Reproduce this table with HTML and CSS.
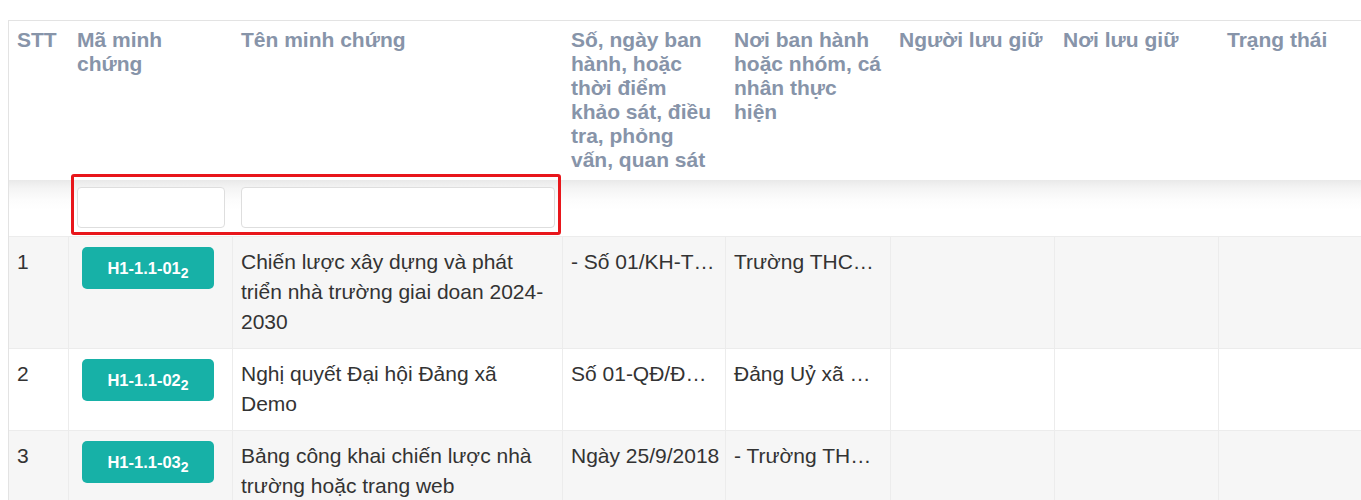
FILE: index.html
```html
<!DOCTYPE html>
<html lang="vi">
<head>
<meta charset="utf-8">
<title>Minh chứng</title>
<link rel="stylesheet" href="styles.css">
</head>
<body>
<div class="page">
  <div class="table-wrap">
    <div class="row head-row">
      <div class="cell">STT</div>
      <div class="cell">Mã minh chứng</div>
      <div class="cell">Tên minh chứng</div>
      <div class="cell">Số, ngày ban hành, hoặc thời điểm khảo sát, điều tra, phỏng vấn, quan sát</div>
      <div class="cell">Nơi ban hành hoặc nhóm, cá nhân thực hiện</div>
      <div class="cell">Người lưu giữ</div>
      <div class="cell">Nơi lưu giữ</div>
      <div class="cell">Trạng thái</div>
    </div>
    <div class="row filter-row">
      <div class="cell"></div>
      <div class="cell"><input class="filter-input" type="text"></div>
      <div class="cell"><input class="filter-input" type="text"></div>
      <div class="cell"></div>
      <div class="cell"></div>
      <div class="cell"></div>
      <div class="cell"></div>
      <div class="cell"></div>
    </div>
    <div class="row body-row striped">
      <div class="cell">1</div>
      <div class="cell"><span class="badge">H1-1.1-01<sub>2</sub></span></div>
      <div class="cell">Chiến lược xây dựng và phát triển nhà trường giai doan 2024-2030</div>
      <div class="cell clip">- Số 01/KH-THCS ngày 05/9/2024</div>
      <div class="cell clip wide-pad">Trường THCS Demo</div>
      <div class="cell"></div>
      <div class="cell"></div>
      <div class="cell"></div>
    </div>
    <div class="row body-row">
      <div class="cell">2</div>
      <div class="cell"><span class="badge">H1-1.1-02<sub>2</sub></span></div>
      <div class="cell">Nghị quyết Đại hội Đảng xã Demo</div>
      <div class="cell clip">Số 01-QĐ/ĐU ngày 10/7/2020</div>
      <div class="cell clip wide-pad">Đảng Uỷ xã Demo</div>
      <div class="cell"></div>
      <div class="cell"></div>
      <div class="cell"></div>
    </div>
    <div class="row body-row striped">
      <div class="cell">3</div>
      <div class="cell"><span class="badge">H1-1.1-03<sub>2</sub></span></div>
      <div class="cell">Bảng công khai chiến lược nhà trường hoặc trang web</div>
      <div class="cell clip">Ngày 25/9/2018</div>
      <div class="cell clip wide-pad">- Trường THCS Demo</div>
      <div class="cell"></div>
      <div class="cell"></div>
      <div class="cell"></div>
    </div>
    <div class="highlight"></div>
  </div>
</div>
</body>
</html>
```
FILE: styles.css
```css
html, body {
  margin: 0;
  padding: 0;
  background: #ffffff;
  overflow: hidden;
}

.page {
  padding: 20px 0 0 8px;
  font-family: "Liberation Sans", Arial, sans-serif;
}

.table-wrap {
  position: relative;
  border-top: 1px solid #e3e3e3;
  border-left: 1px solid #e3e3e3;
  width: 1400px;
}

.row {
  display: grid;
  grid-template-columns: 60px 164px 330px 163px 165px 164px 164px 164px;
}

.cell {
  box-sizing: border-box;
  padding: 0 8px;
  min-width: 0;
}

.head-row {
  height: 159px;
  background: #ffffff;
}

.head-row .cell {
  padding-top: 7px;
  font-size: 21px;
  line-height: 24px;
  font-weight: bold;
  color: #8794a9;
}

.filter-row {
  height: 56px;
  background: linear-gradient(to bottom, #e9e9e9 0px, #f4f4f4 8px, #fcfcfc 20px, #ffffff 30px);
}

.filter-row .cell {
  padding: 7px 8px 0 8px;
}

.filter-input {
  display: block;
  box-sizing: border-box;
  width: 100%;
  height: 41px;
  border: 1px solid #dedede;
  border-radius: 4px;
  background: #ffffff;
  margin: 0;
}

.body-row {
  background: #ffffff;
  border-top: 1px solid #ececec;
}

.body-row.striped {
  background: #f6f6f6;
}

.body-row .cell {
  padding: 10px 4px 11px 8px;
  font-size: 21px;
  line-height: 30px;
  color: #333333;
  border-right: 1px solid #ececec;
}

.clip {
  white-space: nowrap;
  overflow: hidden;
  text-overflow: ellipsis;
}

.body-row .wide-pad {
  padding-right: 10px;
}

.badge {
  display: flex;
  align-items: center;
  justify-content: center;
  width: 132px;
  height: 42px;
  margin-left: 5px;
  border-radius: 5px;
  background: #17b1a7;
  color: #ffffff;
  font-size: 16.5px;
  font-weight: bold;
  line-height: 1;
}

.badge sub {
  font-size: 14px;
  position: relative;
  top: 5px;
  vertical-align: baseline;
  line-height: 0;
}

.highlight {
  position: absolute;
  left: 62px;
  top: 153px;
  width: 484px;
  height: 55px;
  border: 3px solid #e8161b;
  border-radius: 3px;
  pointer-events: none;
}
```
